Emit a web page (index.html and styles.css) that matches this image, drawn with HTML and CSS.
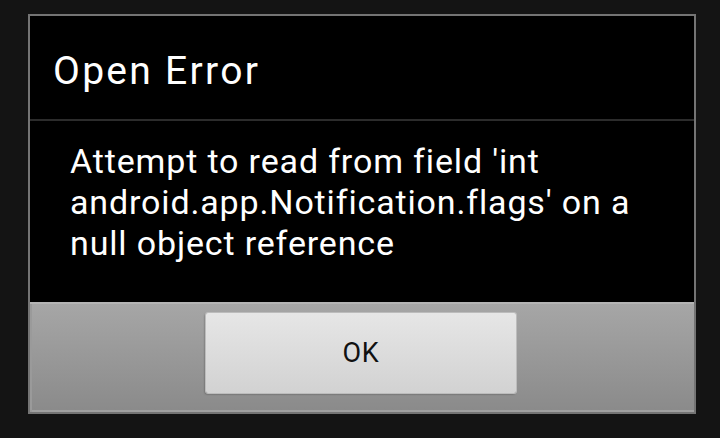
FILE: index.html
```html
<!DOCTYPE html>
<html>
<head>
<meta charset="utf-8">
<link rel="stylesheet" href="styles.css">
</head>
<body>
<div class="dialog">
  <div class="title">Open Error</div>
  <div class="divider"></div>
  <div class="message">Attempt to read from field 'int android.app.Notification.flags' on a null object reference</div>
  <div class="buttonbar">
    <button class="btn">OK</button>
  </div>
</div>
</body>
</html>
```
FILE: styles.css
```css
html, body {
  margin: 0;
  padding: 0;
  background: #141414;
  width: 720px;
  height: 438px;
  overflow: hidden;
}
body {
  padding: 14px 0 0 28px;
  box-sizing: border-box;
  font-family: Roboto, "Noto Sans", sans-serif;
}
.dialog {
  width: 668px;
  box-sizing: border-box;
  border: 2px solid #747474;
  background: #000;
  display: flex;
  flex-direction: column;
}
.title {
  height: 103px;
  box-sizing: border-box;
  padding: 35px 0 0 23px;
  color: #fff;
  font-size: 39px;
  letter-spacing: 2.3px;
  line-height: 40px;
}
.divider {
  height: 2px;
  background: #2c2c2c;
}
.message {
  height: 181px;
  box-sizing: border-box;
  padding: 20px 36px 0 40px;
  color: #fff;
  font-size: 34px;
  letter-spacing: 0.85px;
  line-height: 41px;
}
.buttonbar {
  height: 110px;
  box-sizing: border-box;
  border-top: 2px solid #b4b4b4;
  background: linear-gradient(#a6a6a6, #8a8a8a);
  display: flex;
  justify-content: center;
  padding: 9px 2px 0 0;
  box-shadow: inset 2px 0 0 #9a9a9a, inset 0 -2px 0 #a0a0a0;
}
.btn {
  width: 310px;
  height: 80px;
  border: none;
  border-radius: 2px;
  background: linear-gradient(#e6e6e6, #d2d2d2);
  box-shadow: 0 0 0 1px #bcbcbc, -1px 1px 2px rgba(0,0,0,0.5);
  font-family: Roboto, "Noto Sans", sans-serif;
  font-size: 27px;
  letter-spacing: 0.8px;
  color: #111;
  padding: 0;
}
```
